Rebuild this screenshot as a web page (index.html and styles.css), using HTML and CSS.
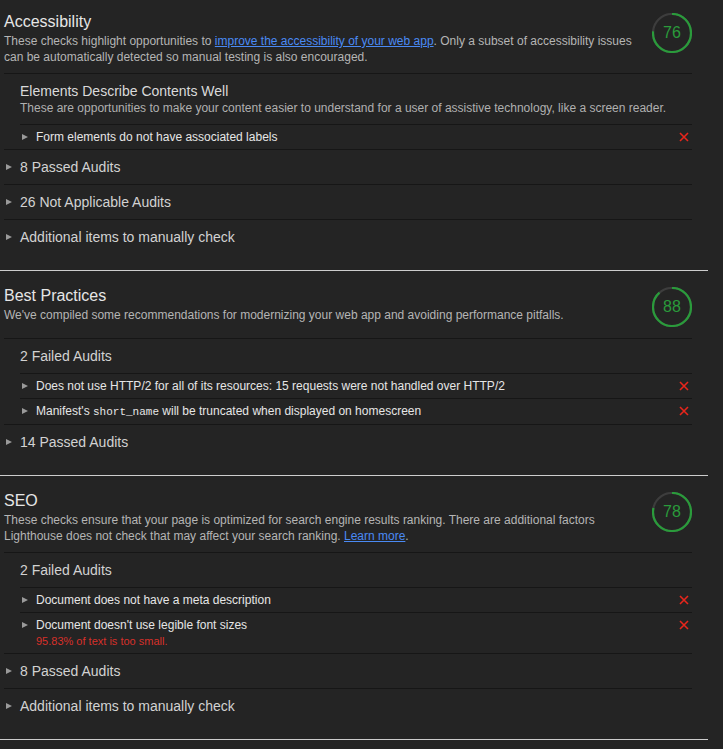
FILE: index.html
```html
<!DOCTYPE html>
<html lang="en">
<head>
<meta charset="utf-8">
<title>Lighthouse report</title>
<link rel="stylesheet" href="styles.css">
</head>
<body>
<div class="report">

  <section class="category">
    <div class="cat-header">
      <div class="cat-text">
        <h2 class="cat-title">Accessibility</h2>
        <p class="cat-desc">These checks highlight opportunities to <a href="#">improve the accessibility of your web app</a>. Only a subset of accessibility issues can be automatically detected so manual testing is also encouraged.</p>
      </div>
      <div class="gauge">
        <svg class="gauge-ring" viewBox="0 0 40 40" width="40" height="40">
          <circle class="gauge-track" cx="20" cy="20" r="19"/>
          <circle class="gauge-arc" cx="20" cy="20" r="19" stroke-dasharray="90.73 119.38" transform="rotate(-90 20 20)"/>
        </svg>
        <span class="gauge-num">76</span>
      </div>
    </div>
    <div class="group">
      <div class="group-intro">
        <div class="group-title">Elements Describe Contents Well</div>
        <div class="group-desc">These are opportunities to make your content easier to understand for a user of assistive technology, like a screen reader.</div>
      </div>
      <div class="audits">
        <div class="audit">
          <span class="audit-arrow"><i class="tri"></i></span>
          <div class="audit-body"><div class="audit-title">Form elements do not have associated labels</div></div>
          <span class="audit-fail"><svg viewBox="0 0 10 10" width="10" height="10"><path d="M1 1L9 9M9 1L1 9"/></svg></span>
        </div>
      </div>
    </div>
    <div class="group"><div class="group-head"><i class="tri"></i><span>8 Passed Audits</span></div></div>
    <div class="group"><div class="group-head"><i class="tri"></i><span>26 Not Applicable Audits</span></div></div>
    <div class="group"><div class="group-head"><i class="tri"></i><span>Additional items to manually check</span></div></div>
  </section>

  <section class="category">
    <div class="cat-header">
      <div class="cat-text">
        <h2 class="cat-title">Best Practices</h2>
        <p class="cat-desc">We've compiled some recommendations for modernizing your web app and avoiding performance pitfalls.</p>
      </div>
      <div class="gauge">
        <svg class="gauge-ring" viewBox="0 0 40 40" width="40" height="40">
          <circle class="gauge-track" cx="20" cy="20" r="19"/>
          <circle class="gauge-arc" cx="20" cy="20" r="19" stroke-dasharray="105.05 119.38" transform="rotate(-90 20 20)"/>
        </svg>
        <span class="gauge-num">88</span>
      </div>
    </div>
    <div class="group">
      <div class="group-head plain"><span>2 Failed Audits</span></div>
      <div class="audits">
        <div class="audit">
          <span class="audit-arrow"><i class="tri"></i></span>
          <div class="audit-body"><div class="audit-title">Does not use HTTP/2 for all of its resources: 15 requests were not handled over HTTP/2</div></div>
          <span class="audit-fail"><svg viewBox="0 0 10 10" width="10" height="10"><path d="M1 1L9 9M9 1L1 9"/></svg></span>
        </div>
        <div class="audit">
          <span class="audit-arrow"><i class="tri"></i></span>
          <div class="audit-body"><div class="audit-title">Manifest's <code>short_name</code> will be truncated when displayed on homescreen</div></div>
          <span class="audit-fail"><svg viewBox="0 0 10 10" width="10" height="10"><path d="M1 1L9 9M9 1L1 9"/></svg></span>
        </div>
      </div>
    </div>
    <div class="group"><div class="group-head"><i class="tri"></i><span>14 Passed Audits</span></div></div>
  </section>

  <section class="category">
    <div class="cat-header">
      <div class="cat-text">
        <h2 class="cat-title">SEO</h2>
        <p class="cat-desc">These checks ensure that your page is optimized for search engine results ranking. There are additional factors Lighthouse does not check that may affect your search ranking. <a href="#">Learn more</a>.</p>
      </div>
      <div class="gauge">
        <svg class="gauge-ring" viewBox="0 0 40 40" width="40" height="40">
          <circle class="gauge-track" cx="20" cy="20" r="19"/>
          <circle class="gauge-arc" cx="20" cy="20" r="19" stroke-dasharray="93.12 119.38" transform="rotate(-90 20 20)"/>
        </svg>
        <span class="gauge-num">78</span>
      </div>
    </div>
    <div class="group">
      <div class="group-head plain"><span>2 Failed Audits</span></div>
      <div class="audits">
        <div class="audit">
          <span class="audit-arrow"><i class="tri"></i></span>
          <div class="audit-body"><div class="audit-title">Document does not have a meta description</div></div>
          <span class="audit-fail"><svg viewBox="0 0 10 10" width="10" height="10"><path d="M1 1L9 9M9 1L1 9"/></svg></span>
        </div>
        <div class="audit">
          <span class="audit-arrow"><i class="tri"></i></span>
          <div class="audit-body">
            <div class="audit-title">Document doesn't use legible font sizes</div>
            <div class="audit-err">95.83% of text is too small.</div>
          </div>
          <span class="audit-fail"><svg viewBox="0 0 10 10" width="10" height="10"><path d="M1 1L9 9M9 1L1 9"/></svg></span>
        </div>
      </div>
    </div>
    <div class="group"><div class="group-head"><i class="tri"></i><span>8 Passed Audits</span></div></div>
    <div class="group"><div class="group-head"><i class="tri"></i><span>Additional items to manually check</span></div></div>
  </section>

</div>
</body>
</html>
```
FILE: styles.css
```css
html, body {
  margin: 0;
  background: #242424;
}
body {
  font-family: "Liberation Sans", Arial, sans-serif;
  color: #d8d8d8;
}
.report {
  width: 708px;
}
.category {
  padding: 15px 16px 16px 4px;
  border-bottom: 1px solid #cdcdcd;
}
.category:first-child {
  padding-top: 12px;
}
.cat-header {
  display: flex;
  align-items: flex-start;
  gap: 12px;
  padding-bottom: 8px;
}
.cat-text {
  flex: 1;
}
.cat-title {
  margin: 0;
  font-size: 16px;
  line-height: 20px;
  font-weight: normal;
  color: #e6e6e6;
}
.cat-desc {
  margin: 1px 0 0;
  font-size: 12px;
  line-height: 16px;
  color: #b5b5b5;
}
.cat-desc a {
  color: #4a8af4;
  text-decoration: underline;
}
.gauge {
  width: 40px;
  height: 40px;
  margin: 1px 0 3px;
  display: grid;
  place-items: center;
}
.gauge > * {
  grid-area: 1 / 1;
}
.gauge-ring {
  display: block;
}
.gauge-track {
  fill: none;
  stroke: #3d3d3d;
  stroke-width: 2.2;
}
.gauge-arc {
  fill: none;
  stroke: #2a9b3b;
  stroke-width: 2.2;
}
.gauge-num {
  font-size: 16px;
  line-height: 20px;
  color: #2a9b3b;
}
.group {
  border-top: 1px solid #161616;
}
.group-head {
  height: 34px;
  display: flex;
  align-items: center;
  gap: 8px;
  padding-left: 2px;
  font-size: 14px;
  color: #d2d2d2;
}
.group-head.plain {
  padding-left: 16px;
}
.tri {
  display: block;
  width: 0;
  height: 0;
  border-left: 6px solid #9a9a9a;
  border-top: 3.5px solid transparent;
  border-bottom: 3.5px solid transparent;
}
.group-intro {
  padding: 8px 0 8px 16px;
}
.group-title {
  font-size: 14px;
  line-height: 18px;
  color: #dadada;
}
.group-desc {
  font-size: 12px;
  line-height: 16px;
  color: #b0b0b0;
}
.audits {
  margin-left: 16px;
}
.audit {
  display: flex;
  align-items: flex-start;
  gap: 8px;
  padding: 4px 3px 4px 2px;
  border-top: 1px solid #161616;
}
.audit-arrow,
.audit-fail {
  height: 16px;
  display: flex;
  align-items: center;
}
.audit-body {
  flex: 1;
}
.audit-title {
  font-size: 12px;
  line-height: 16px;
  color: #e6e6e6;
}
.audit-title code {
  font-family: "Liberation Mono", "DejaVu Sans Mono", monospace;
  font-size: 11px;
}
.audit-err {
  font-size: 11px;
  line-height: 16px;
  color: #d8302a;
}
.audit-fail svg {
  display: block;
}
.audit-fail path {
  stroke: #e8261c;
  stroke-width: 1.6;
  fill: none;
}
```
